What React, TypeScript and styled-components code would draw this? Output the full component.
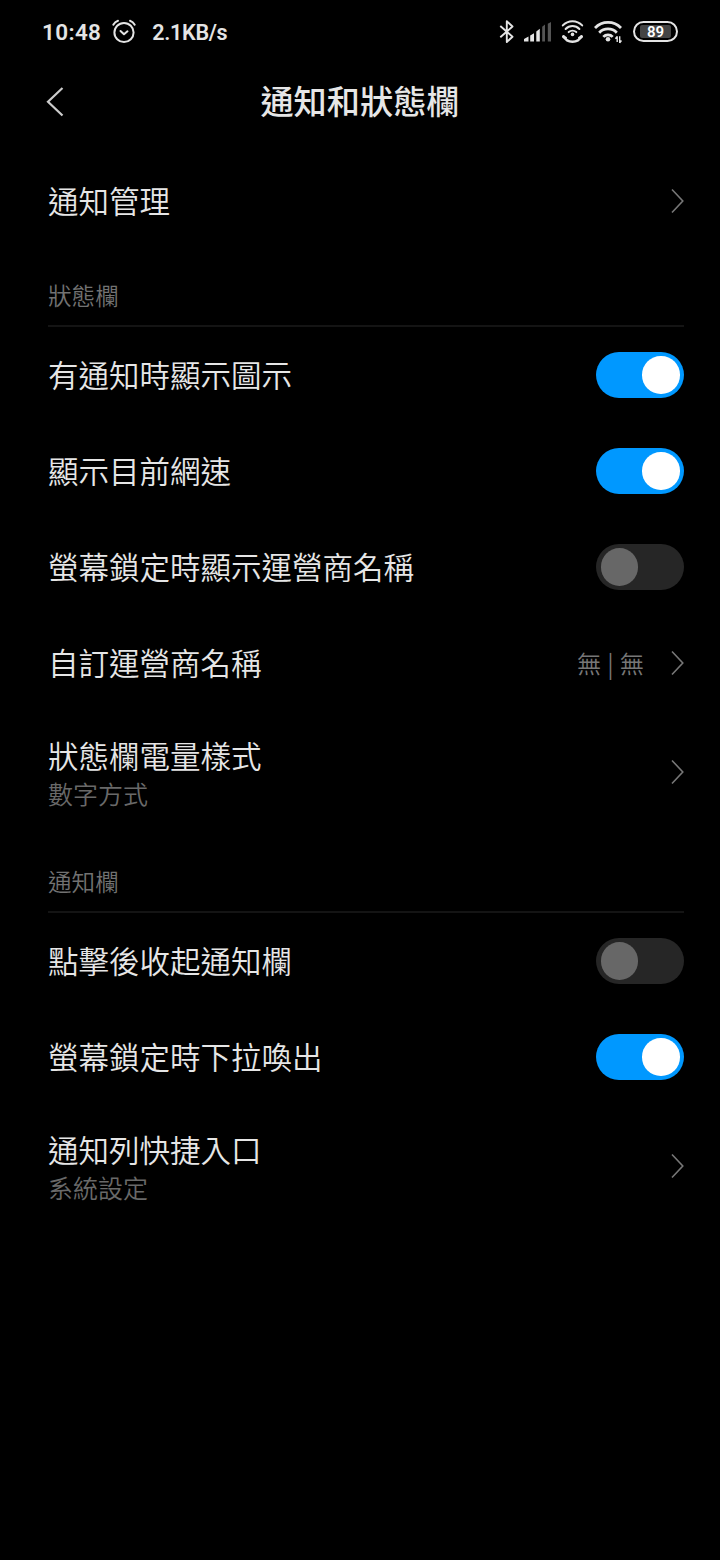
import React from "react";
import styled, { createGlobalStyle } from "styled-components";

const Global = createGlobalStyle`
  * { box-sizing: border-box; }
  body { margin: 0; background: #000; font-family: "Noto Sans CJK TC", sans-serif; }
`;
const Screen = styled.main`
  width: 720px; height: 1560px; background: #000; color: #e6e6e6; overflow: hidden;
`;
const StatusBar = styled.header`
  height: 64px; display: flex; justify-content: space-between; padding: 0 42px;
`;
const StatusText = styled.div`
  display: flex; align-items: center;
  font: 600 22.5px/64px Roboto, sans-serif; letter-spacing: 0.35px; color: #e4e4e4;
`;
const NetSpeed = styled.span`font-size: 21.5px; letter-spacing: -0.3px; padding-top: 1px;`;
const AlarmIcon = styled.svg`margin: 0 15px 0 10px;`;
const StatusIcons = styled.div`
  display: flex; align-items: center; color: #e4e4e4;
`;
const StatusIcon = styled.svg<{ $gap: number }>`margin-right: ${p => p.$gap}px; display: block;`;
const Battery = styled.div`
  width: 45px; height: 21px; border: 2px solid #e4e4e4; border-radius: 11px; padding: 2px 5px; margin-top: -1px;
`;
const BatteryLevel = styled.div`
  height: 13px; width: 31px; border-radius: 2px; background: #444; text-align: center;
  font: 600 15px/14px Roboto, sans-serif; color: #fff;
`;
const TitleBar = styled.div`
  height: 90px; display: grid; grid-template-columns: 48px 1fr 48px; padding: 0 42px;
`;
const Title = styled.h1`
  margin: 0; text-align: center; font-size: 33.2px; line-height: 72px; font-weight: 500;
`;
const BackIcon = styled.svg`margin-top: 22px;`;
const Row = styled.div<{ $h?: number }>`
  height: ${p => p.$h ?? 96}px; padding: 0 36px 0 48px; display: flex; align-items: center; justify-content: space-between;
`;
const Label = styled.div`
  font-size: 30.5px; line-height: 38px; font-weight: 350; white-space: nowrap;
  ${Row} > & { padding-bottom: 2px; }
`;
const Stack = styled.div`padding-top: 3px;`;
const Summary = styled.div`font-size: 25px; line-height: 38px; font-weight: 350; color: #696969;`;
const Value = styled.div`
  display: flex; align-items: center; gap: 27px; font-size: 24.3px; line-height: 36px; font-weight: 350; word-spacing: 0.6px; color: #777;
`;
const Section = styled.h2<{ $h: number }>`
  height: ${p => p.$h}px; margin: 0 36px 0 48px; border-bottom: 2px solid #141414;
  display: flex; align-items: flex-end; padding-bottom: 12px;
  font-size: 23.6px; line-height: 36px; font-weight: 350; color: #727272;
`;
const Track = styled.div<{ $on: boolean }>`
  width: 88px; height: 46px; border-radius: 23px; padding: 4px 4.5px; display: flex;
  justify-content: ${p => (p.$on ? "flex-end" : "flex-start")};
  background: ${p => (p.$on ? "#0098ff" : "#262626")};
`;
const Thumb = styled.div<{ $on: boolean }>`
  width: 37.5px; height: 37.5px; border-radius: 50%; background: ${p => (p.$on ? "#fff" : "#676767")};
`;
const Switch = ({ on = false }: { on?: boolean }) => <Track $on={on}><Thumb $on={on} /></Track>;
const Chevron = () => (
  <svg width="13" height="26" viewBox="0 0 13 26" fill="none" stroke="#777" strokeWidth="1.6"><path d="M1 1.5L11.8 13L1 24.5" /></svg>
);

export default function App() {
  return (
    <Screen>
      <Global />
      <StatusBar>
        <StatusText>
          <span>10:48</span>
          <AlarmIcon width="26" height="26" viewBox="0 0 26 26" fill="none" stroke="currentColor" strokeWidth="2" strokeLinecap="round" strokeLinejoin="round">
            <circle cx="13" cy="13.5" r="9.6" />
            <path d="M2.3 5.7Q4 2.7 7 1.7M19 1.7Q22 2.7 23.7 5.7M9.5 12L13 15.3L16.5 12.3" />
          </AlarmIcon>
          <NetSpeed>2.1KB/s</NetSpeed>
        </StatusText>
        <StatusIcons>
          <StatusIcon $gap={10} width="16" height="24" viewBox="0 0 16 24" fill="none" stroke="currentColor" strokeWidth="1.9" strokeLinejoin="round">
            <path d="M2.3 6L14.5 16.8L8.8 22V1.3L14.5 6.5L2.3 17.3" />
          </StatusIcon>
          <StatusIcon $gap={9} width="28" height="22" viewBox="0 0 28 22" fill="currentColor">
            <path d="M0 18L4.5 15.5V20.5H0zM6.2 14.6L10 12.3V20.5H6.2zM12.3 10.5L15.8 7.8V20.5H12.3z" />
            <path fill="#555" d="M18.2 5.7L21 3.6V20.5H18.2zM23.8 2.8L27 1V20.5H23.8z" />
          </StatusIcon>
          <StatusIcon $gap={10} width="23" height="24" viewBox="0 0 23 24" fill="none" stroke="currentColor" strokeWidth="2" strokeLinecap="round">
            <path d="M1.8 5.4A13.2 13.2 0 0 1 21.2 5.4M4.6 9A9.6 9.6 0 0 1 18.4 9M7.7 12.1A5.8 5.8 0 0 1 15.3 12.1" />
            <circle cx="11.5" cy="14.4" r="1.8" fill="currentColor" stroke="none" />
            <path d="M2.6 16.3C6 23.6 17 23.6 20.4 16.3" strokeWidth="2.4" />
            <path d="M2.4 16.7L4.6 17.9M20.6 16.7L18.4 17.9" strokeWidth="2.8" />
          </StatusIcon>
          <StatusIcon $gap={11} width="28" height="24" viewBox="0 0 28 24" fill="none" stroke="currentColor" strokeWidth="2.8">
            <path d="M1 8A18 18 0 0 1 27 8M5.2 12.7A12.2 12.2 0 0 1 22.8 12.7M9.3 16.9A6.5 6.5 0 0 1 18.7 16.9" />
            <circle cx="14" cy="19.3" r="2.3" fill="currentColor" stroke="none" />
            <path d="M23.2 16.2V22M21.4 18.7L23.2 16.5M25.7 16.2V23M27.5 20.5L25.7 22.7" strokeWidth="1.4" />
          </StatusIcon>
          <Battery><BatteryLevel>89</BatteryLevel></Battery>
        </StatusIcons>
      </StatusBar>
      <TitleBar>
        <BackIcon width="24" height="32" viewBox="0 0 24 32" fill="none" stroke="#ccc" strokeWidth="2.2"><path d="M20.5 2L6 15.7L20.5 29.5" /></BackIcon>
        <Title>通知和狀態欄</Title>
      </TitleBar>
      <Row $h={94}><Label>通知管理</Label><Chevron /></Row>
      <Section $h={79}>狀態欄</Section>
      <Row><Label>有通知時顯示圖示</Label><Switch on /></Row>
      <Row><Label>顯示目前網速</Label><Switch on /></Row>
      <Row><Label>螢幕鎖定時顯示運營商名稱</Label><Switch /></Row>
      <Row><Label>自訂運營商名稱</Label><Value>無 | 無<Chevron /></Value></Row>
      <Row $h={122}><Stack><Label>狀態欄電量樣式</Label><Summary>數字方式</Summary></Stack><Chevron /></Row>
      <Section $h={80}>通知欄</Section>
      <Row><Label>點擊後收起通知欄</Label><Switch /></Row>
      <Row><Label>螢幕鎖定時下拉喚出</Label><Switch on /></Row>
      <Row $h={122}><Stack><Label>通知列快捷入口</Label><Summary>系統設定</Summary></Stack><Chevron /></Row>
    </Screen>
  );
}
